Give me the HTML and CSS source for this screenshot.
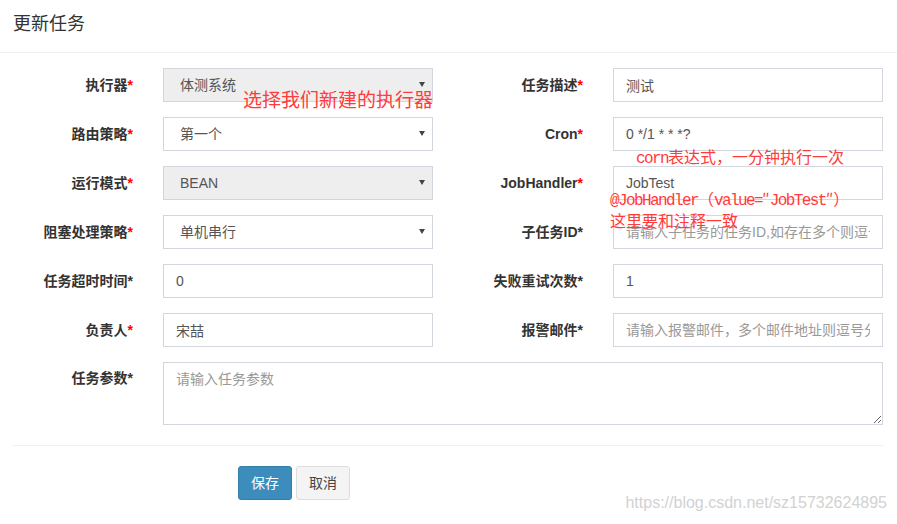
FILE: index.html
```html
<!DOCTYPE html>
<html lang="zh-CN">
<head>
<meta charset="utf-8">
<title>更新任务</title>
<link rel="stylesheet" href="styles.css">
</head>
<body>
<div class="modal">
  <div class="modal-header">
    <h4 class="modal-title">更新任务</h4>
  </div>
  <div class="modal-body">
    <form class="form-grid">
      <label class="ctl-label">执行器<span class="req">*</span></label>
      <div class="select-wrap"><select class="ctl disabled"><option>体测系统</option></select></div>
      <label class="ctl-label">任务描述<span class="req">*</span></label>
      <input class="ctl" type="text" value="测试">

      <label class="ctl-label">路由策略<span class="req">*</span></label>
      <div class="select-wrap"><select class="ctl"><option>第一个</option></select></div>
      <label class="ctl-label">Cron<span class="req">*</span></label>
      <input class="ctl" type="text" value="0 */1 * * *?">

      <label class="ctl-label">运行模式<span class="req">*</span></label>
      <div class="select-wrap"><select class="ctl disabled"><option>BEAN</option></select></div>
      <label class="ctl-label">JobHandler<span class="req">*</span></label>
      <input class="ctl" type="text" value="JobTest">

      <label class="ctl-label">阻塞处理策略<span class="req">*</span></label>
      <div class="select-wrap"><select class="ctl"><option>单机串行</option></select></div>
      <label class="ctl-label">子任务ID*</label>
      <input class="ctl" type="text" placeholder="请输入子任务的任务ID,如存在多个则逗号分隔">

      <label class="ctl-label">任务超时时间*</label>
      <input class="ctl" type="text" value="0">
      <label class="ctl-label">失败重试次数*</label>
      <input class="ctl" type="text" value="1">

      <label class="ctl-label">负责人<span class="req">*</span></label>
      <input class="ctl" type="text" value="宋喆">
      <label class="ctl-label">报警邮件*</label>
      <input class="ctl" type="text" placeholder="请输入报警邮件，多个邮件地址则逗号分隔">

      <label class="ctl-label top">任务参数*</label>
      <textarea class="ctl area" placeholder="请输入任务参数"></textarea>
    </form>
    <div class="divider"></div>
    <div class="actions">
      <button type="button" class="btn btn-primary">保存</button>
      <button type="button" class="btn btn-default">取消</button>
    </div>
  </div>

  <div class="note note-exec">选择我们新建的执行器</div>
  <div class="note note-cron"><span class="mono">corn</span>表达式，一分钟执行一次</div>
  <div class="note note-handler"><span class="mono">@JobHandler</span>（<span class="mono">value=</span>″<span class="mono">JobTest</span>″）<br>这里要和注释一致</div>
  <div class="watermark">https://blog.csdn.net/sz15732624895</div>
</div>
</body>
</html>
```

FILE: styles.css
```css
html, body {
  margin: 0;
  padding: 0;
  background: #fff;
}
body {
  font-family: "Liberation Sans", "Noto Sans CJK SC", sans-serif;
  font-size: 14px;
  color: #333;
}
.modal {
  position: relative;
  width: 897px;
  height: 524px;
  overflow: hidden;
}
.modal-header {
  padding: 13px 13px 17px;
  border-bottom: 1px solid #f0f0f0;
}
.modal-title {
  margin: 0;
  font-size: 18px;
  font-weight: normal;
  line-height: 22px;
  color: #333;
}
.modal-body {
  padding: 15px 14px 0 13px;
}
.form-grid {
  margin: 0;
  display: grid;
  grid-template-columns: 120px 270px 120px 270px;
  column-gap: 30px;
  row-gap: 15px;
}
.ctl-label {
  align-self: center;
  text-align: right;
  font-weight: bold;
  font-size: 14px;
  line-height: 20px;
  color: #333;
  white-space: nowrap;
}
.ctl-label.top {
  align-self: start;
  padding-top: 6px;
}
.req {
  color: #f00;
}
.ctl {
  box-sizing: border-box;
  display: block;
  width: 100%;
  height: 34px;
  margin: 0;
  padding: 6px 12px;
  border: 1px solid #d2d6de;
  border-radius: 0;
  background: #fff;
  font-family: "Liberation Sans", "Noto Sans CJK SC", sans-serif;
  font-size: 14px;
  line-height: 20px;
  color: #555;
  outline: none;
}
.ctl::placeholder {
  color: #999;
}
.select-wrap {
  position: relative;
}
.select-wrap select {
  -webkit-appearance: none;
  appearance: none;
  padding-left: 16px;
}
.select-wrap::after {
  content: "";
  position: absolute;
  right: 8px;
  top: 14px;
  width: 0;
  height: 0;
  border-left: 3px solid transparent;
  border-right: 3px solid transparent;
  border-top: 5px solid #444;
  pointer-events: none;
}
.ctl.disabled {
  background: #eee;
}
.area {
  grid-column: 2 / 5;
  height: 63px;
  resize: vertical;
}
.divider {
  margin-top: 20px;
  height: 1px;
  background: #f0f0f0;
}
.actions {
  display: flex;
  gap: 4px;
  padding: 20px 0 0 225px;
}
.btn {
  box-sizing: border-box;
  height: 34px;
  padding: 6px 12px;
  border-radius: 3px;
  font-family: "Liberation Sans", "Noto Sans CJK SC", sans-serif;
  font-size: 14px;
  line-height: 20px;
  cursor: pointer;
}
.btn-primary {
  background: #3c8dbc;
  border: 1px solid #367fa9;
  color: #fff;
}
.btn-default {
  background: #f4f4f4;
  border: 1px solid #ddd;
  color: #444;
}
.note {
  position: absolute;
  color: #ff3b3b;
  white-space: nowrap;
  font-family: "Noto Sans CJK SC", sans-serif;
  line-height: 16px;
}
.note .mono {
  font-family: "Liberation Mono", monospace;
  letter-spacing: -1.6px;
}
.note-exec {
  left: 243px;
  top: 89px;
  font-size: 19px;
  line-height: 19px;
}
.note-cron {
  left: 636px;
  top: 148px;
  font-size: 16px;
}
.note-handler {
  left: 610px;
  top: 189px;
  font-size: 16px;
  line-height: 19px;
}
.watermark {
  position: absolute;
  right: 10px;
  top: 494px;
  font-family: "Liberation Sans", sans-serif;
  font-size: 16px;
  color: #d2d2d2;
  white-space: nowrap;
}
```
